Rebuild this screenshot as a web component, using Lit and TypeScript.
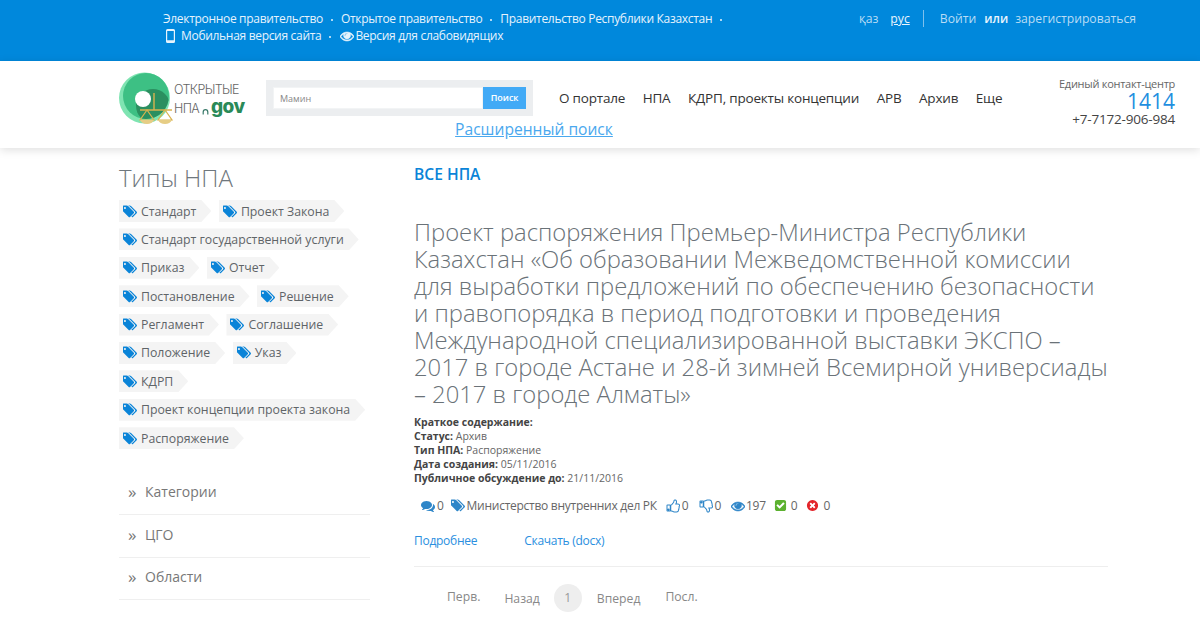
import { LitElement, html, css, svg } from "lit";
import { customElement } from "lit/decorators.js";

const P = {
  tags: "M384 448q0-53-37.5-90.5t-90.5-37.5-90.5 37.5-37.5 90.5 37.5 90.5 90.5 37.5 90.5-37.5 37.5-90.5zm1067 576q0 53-37 90l-491 492q-39 37-91 37-53 0-90-37l-715-716q-38-37-64.5-101t-26.5-117v-416q0-52 38-90t90-38h416q53 0 117 26.5t102 64.5l715 714q37 39 37 91zm384 0q0 53-37 90l-491 492q-39 37-91 37-36 0-59-14t-53-45l470-470q37-37 37-90 0-52-37-91l-715-714q-38-38-102-64.5t-117-26.5h224q53 0 117 26.5t102 64.5l715 714q37 39 37 91z",
  eye: "M1664 960q-152-236-381-353 61 104 61 225 0 185-131.5 316.5t-316.5 131.5-316.5-131.5-131.5-316.5q0-121 61-225-229 117-381 353 133 205 333.5 326.5t434.5 121.5 434.5-121.5 333.5-326.5zm-720-384q0-20-14-34t-34-14q-125 0-214.5 89.5t-89.5 214.5q0 20 14 34t34 14 34-14 14-34q0-86 61-147t147-61q20 0 34-14t14-34zm848 384q0 34-20 69-140 230-376.5 368.5t-499.5 138.5-499.5-139-376.5-368q-20-35-20-69t20-69q140-229 376.5-368t499.5-139 499.5 139 376.5 368q20 35 20 69z",
  check: "M813 1299l614-614q19-19 19-45t-19-45l-102-102q-19-19-45-19t-45 19l-467 467-211-211q-19-19-45-19t-45 19l-102 102q-19 19-19 45t19 45l358 358q19 19 45 19t45-19zm851-883v960q0 119-84.5 203.5t-203.5 84.5h-960q-119 0-203.5-84.5t-84.5-203.5v-960q0-119 84.5-203.5t203.5-84.5h960q119 0 203.5 84.5t84.5 203.5z",
  times: "M1277 1122q0-26-19-45l-181-181 181-181q19-19 19-45 0-27-19-46l-90-90q-19-19-46-19-26 0-45 19l-181 181-181-181q-19-19-45-19-27 0-46 19l-90 90q-19 19-19 46 0 26 19 45l181 181-181 181q-19 19-19 45 0 27 19 46l90 90q19 19 46 19 26 0 45-19l181-181 181 181q19 19 45 19 27 0 46-19l90-90q19-19 19-46zm387-226q0 209-103 385.5t-279.5 279.5-385.5 103-385.5-103-279.5-279.5-103-385.5 103-385.5 279.5-279.5 385.5-103 385.5 103 279.5 279.5 103 385.5z",
  comments: "M1408 768q0 139-94 257t-256.5 186.5-353.5 68.5q-86 0-176-16-124 88-278 128-36 9-86 16h-3q-11 0-20.5-8t-11.5-21q-1-3-1-6.5t.5-6.5 2-6l2.5-5 3.5-5.5 4-5 4.5-5 4-4.5q5-6 23-25t26-29.5 22.5-29 25-38.5 20.5-44q-124-72-195-177t-71-224q0-139 94-257t256.5-186.5 353.5-68.5 353.5 68.5 256.5 186.5 94 257zm384 256q0 120-71 224.5t-195 176.5q10 24 20.5 44t25 38.5 22.5 29 26 29.5 23 25q1 1 4 4.5t4.5 5 4 5 3.5 5.5l2.5 5 2 6 .5 6.5-1 6.5q-3 14-13 22t-22 7q-50-7-86-16-154-40-278-128-90 16-176 16-271 0-472-132 58 4 88 4 161 0 309-45t264-129q125-92 192-212t67-254q0-77-23-152 129 71 204 178t75 230z",
  thumb: "M384 1344q0-26-19-45t-45-19-45 19-19 45 19 45 45 19 45-19 19-45zm160-512v640q0 26-19 45t-45 19h-288q-26 0-45-19t-19-45v-640q0-26 19-45t45-19h288q26 0 45 19t19 45zm1184 0q0 86-55 149 15 44 15 76 3 76-43 137 17 56 0 117-15 57-54 94 9 112-49 181-64 76-197 78h-129q-66 0-144-15.5t-121.5-29-120.5-39.5q-123-43-158-44-26-1-45-19.5t-19-44.5v-641q0-25 18-43.5t43-20.5q24-2 76-59t101-121q68-87 101-120 18-18 31-48t17.5-48.5 13.5-60.5q7-39 12.5-61t19.5-52 34-50q19-19 45-19 46 0 82.5 10.5t60 26 40 40.5 24 45 12 50 5 45 .5 39q0 38-9.5 76t-19 60-27.5 56q-3 6-10 18t-11 22-8 24h277q78 0 135 57t57 135z",
};

const icon = (d: string, w: number, h: number, color: string, vb = "0 0 1792 1792") => html`<svg class="ic" width=${w} height=${h} viewBox=${vb} fill=${color}><path d=${d}></path></svg>`;
const eye = (color: string) => html`<svg class="ic" width="14" height="14" viewBox="0 0 1792 1792" fill=${color} stroke=${color} stroke-width="70"><path d=${P.eye}></path></svg>`;
const thumb = (down: boolean) => html`<svg class="ic" width="14" height="14" viewBox="0 0 1792 1792" fill="none" stroke="#2f86c8" stroke-width="130"><g transform=${down ? "translate(0 1792) scale(1 -1)" : ""}><path d=${P.thumb}></path></g></svg>`;

const tagRows = [
  ["Стандарт", "Проект Закона"],
  ["Стандарт государственной услуги"],
  ["Приказ", "Отчет"],
  ["Постановление", "Решение"],
  ["Регламент", "Соглашение"],
  ["Положение", "Указ"],
  ["КДРП"],
  ["Проект концепции проекта закона"],
  ["Распоряжение"],
];

@customElement("app-root")
export class AppRoot extends LitElement {
  static styles = css`
    :host { display: block; width: 1200px; height: 620px; overflow: hidden; background: #fff; font-family: "Open Sans", sans-serif; color: #444; }
    a { color: inherit; text-decoration: none; }
    .ic { display: block; flex: none; }

    .top { height: 61px; background: #0088dc; box-sizing: border-box; padding: 10px 64px 0 163px; display: flex; justify-content: space-between; color: #e6f3fc; line-height: 17px; }
    .top-left { display: flex; flex-direction: column; font-size: 12px; letter-spacing: -0.31px; }
    .top-row { display: flex; align-items: center; height: 17px; white-space: nowrap; }
    .dot { width: 2px; height: 2px; background: #e6f3fc; margin: 3px 8px 0 8px; border-radius: 50%; }
    .mob { margin: 0 6px 0 3px; }
    .eye { margin: 0 1px 0 1px; }
    .top-right { display: flex; align-items: center; height: 17px; color: #b9dcf5; font-size: 12.2px; }
    .lang { margin-right: 12px; }
    .cur { color: #eaf5fd; text-decoration: underline; margin-right: 13px; }
    .sep { width: 1px; height: 17px; background: #7fc0ec; margin-right: 16px; }
    .or { font-weight: 600; color: #e8f4fd; margin: 0 7px 0 8px; }

    .head { height: 87px; box-sizing: border-box; padding: 0 25px 0 119px; display: flex; background: #fff; box-shadow: 0 2px 9px rgba(0,0,0,0.13); position: relative; }
    .logo { width: 147px; flex: none; padding-top: 11px; box-sizing: border-box; }
    .logo-wrap { position: relative; width: 130px; height: 56px; }
    .logo-mark { position: absolute; left: 0; top: 0; }
    .l1, .l2 { position: absolute; left: 55px; white-space: nowrap; font-family: "Inter", sans-serif; color: #666; font-size: 12.5px; letter-spacing: -0.6px; font-weight: 300; line-height: 16px; }
    .l1 { top: 10px; }
    .l2 { top: 29px; }
    .house { position: absolute; left: 83px; top: 36px; }
    .gov { position: absolute; left: 92px; top: 22px; font-family: "Inter", sans-serif; font-weight: 800; color: #2a8a58; font-size: 19px; line-height: 26px; letter-spacing: -0.6px; }
    .center { width: 536px; flex: none; display: flex; flex-direction: column; }
    .center-row { display: flex; padding-top: 19px; }
    .search { width: 267px; height: 36px; background: #eceef0; box-sizing: border-box; padding: 7px; display: flex; flex: none; }
    .input { width: 211px; height: 22px; background: #fff; border: 1px solid #f2f4f5; box-sizing: border-box; padding-left: 6px; font-size: 9px; line-height: 21px; color: #888; }
    .btn { width: 43px; height: 22px; background: #42aaf6; color: #fff; font-size: 9px; font-weight: 600; line-height: 22px; text-align: center; }
    .nav { display: flex; gap: 17.6px; margin-left: 26px; font-size: 13.5px; letter-spacing: -0.2px; line-height: 36px; color: #333; white-space: nowrap; }
    .adv { text-align: center; font-size: 15.6px; line-height: 22px; color: #4aa8ee; text-decoration: underline; margin-top: 2px; }
    .contact { margin-left: auto; text-align: right; padding-top: 15px; white-space: nowrap; }
    .c1 { font-size: 11px; letter-spacing: -0.28px; line-height: 15px; color: #666; }
    .c2 { font-size: 21px; line-height: 21px; color: #1f8fe0; font-weight: 400; }
    .c3 { font-size: 13.5px; letter-spacing: -0.2px; line-height: 14px; color: #444; }

    .main { display: flex; padding-left: 119px; }
    .side { width: 251px; flex: none; margin-right: 44px; padding-top: 16px; }
    .side h2 { margin: 0; font-size: 24px; line-height: 28px; font-weight: 300; color: #6f777d; }
    .tags { display: flex; flex-direction: column; gap: 6.4px; margin-top: 8px; }
    .tag-row { display: flex; gap: 7.5px; }
    .tag { height: 22px; background: #f4f4f4; clip-path: polygon(0 0, calc(100% - 10px) 0, 100% 50%, calc(100% - 10px) 100%, 0 100%); display: flex; align-items: center; padding: 0 15px 0 4px; font-size: 12.3px; color: #5f6468; white-space: nowrap; }
    .tag .ic { margin-right: 4px; }
    .acc { margin-top: 22px; }
    .acc-item { height: 42.5px; border-bottom: 1px solid #efefef; display: flex; align-items: center; box-sizing: border-box; padding: 0 0 3px 9px; font-size: 14px; color: #777; }
    .chev { width: 17px; font-size: 17px; line-height: 17px; font-weight: 400; color: #777; }
    .acc-item:first-child { height: 44px; }

    .content { width: 694px; flex: none; padding-top: 16px; }
    .all { font-size: 15.6px; line-height: 20px; font-weight: 600; color: #0a84d8; }
    h1 { margin: 34.5px 0 0; font-size: 23.8px; line-height: 27px; font-weight: 300; color: #6a7278; }
    .meta { margin-top: 7.2px; font-size: 10.5px; line-height: 14px; color: #666; }
    .meta b { color: #444; font-weight: 700; }
    .stats { display: flex; align-items: center; height: 18px; margin-top: 12px; padding-left: 7px; font-size: 12px; letter-spacing: -0.27px; color: #666; }
    .stat { display: flex; align-items: center; gap: 2px; white-space: nowrap; }
    .links { display: flex; gap: 47px; margin-top: 17px; font-size: 12px; letter-spacing: -0.27px; line-height: 17px; color: #2a8fe0; }
    .rule { height: 1px; background: #eee; margin-top: 17px; }
    .pager { height: 50px; padding-left: 33px; display: flex; align-items: flex-start; font-size: 12.2px; color: #888; }
    .p { line-height: 17px; }
    .num { width: 28px; height: 28px; margin: 17px 15px 0 14px; border-radius: 50%; background: #eee; text-align: center; line-height: 28px; color: #999; }
  `;

  render() {
    return html`
      <div class="top">
        <div class="top-left">
          <div class="top-row">
            <a>Электронное правительство</a><span class="dot"></span>
            <a>Открытое правительство</a><span class="dot"></span>
            <a>Правительство Республики Казахстан</a><span class="dot"></span>
          </div>
          <div class="top-row">
            <svg class="ic mob" width="9" height="14" viewBox="0 0 9 14"><path fill-rule="evenodd" fill="#e6f3fc" d="M1.500 0h6A1.500 1.500 0 0 1 9 1.500v11A1.500 1.500 0 0 1 7.500 14h-6A1.500 1.500 0 0 1 0 12.500v-11A1.500 1.500 0 0 1 1.500 0zM1.200 2v9.300h6.600V2z"></path></svg>
            <a>Мобильная версия сайта</a><span class="dot"></span>
            <span class="eye">${eye("#e6f3fc")}</span>
            <a>Версия для слабовидящих</a>
          </div>
        </div>
        <div class="top-right">
          <a class="lang">қаз</a><a class="cur">рус</a><span class="sep"></span>
          <a>Войти</a><span class="or">или</span><a>зарегистрироваться</a>
        </div>
      </div>

      <div class="head">
        <div class="logo">
          <div class="logo-wrap">
            <svg class="logo-mark" width="56" height="56" viewBox="0 0 56 56">
              ${svg`<defs><clipPath id="mc"><circle cx="27" cy="24" r="23"></circle></clipPath></defs>
              <circle cx="25.500" cy="26" r="25.500" fill="#7fe4b2"></circle>
              <circle cx="27" cy="24" r="23" fill="#3dc084"></circle>
              <circle cx="34" cy="34" r="17" fill="#2b8f60" clip-path="url(#mc)"></circle>
              <circle cx="24" cy="27" r="8" fill="#fff"></circle>
              <path d="M35 21v17M21 38h32" stroke="#d9b34f" stroke-width="1.400" fill="none"></path>
              <path d="M28 38l-7 10h14zM46 38l-7 10h14z" stroke="#d9b34f" stroke-width="1.200" fill="none"></path>
              <path d="M21 48h14q-2 4-7 4t-7-4zM39 48h14q-2 4-7 4t-7-4z" fill="#e6cd85"></path>`}
            </svg>
            <span class="l1">ОТКРЫТЫЕ</span><span class="l2">НПА</span>
            <svg class="house" width="7" height="7" viewBox="0 0 7 7"><path d="M1.200 6.500V4a2.300 2.300 0 0 1 4.600 0v2.500" fill="none" stroke="#3a7a6a" stroke-width="1.200"></path></svg>
            <span class="gov">gov</span>
          </div>
        </div>
        <div class="center">
          <div class="center-row">
            <div class="search"><div class="input">Мамин</div><div class="btn">Поиск</div></div>
            <div class="nav"><a>О портале</a><a>НПА</a><a>КДРП, проекты концепции</a><a>АРВ</a><a>Архив</a><a>Еще</a></div>
          </div>
          <a class="adv">Расширенный поиск</a>
        </div>
        <div class="contact">
          <div class="c1">Единый контакт-центр</div>
          <div class="c2">1414</div>
          <div class="c3">+7-7172-906-984</div>
        </div>
      </div>

      <div class="main">
        <aside class="side">
          <h2>Типы НПА</h2>
          <div class="tags">
            ${tagRows.map((r) => html`<div class="tag-row">${r.map((t) => html`<a class="tag">${icon(P.tags, 14, 13, "#0a84d8", "0 200 1835 1400")}${t}</a>`)}</div>`)}
          </div>
          <div class="acc">
            ${["Категории", "ЦГО", "Области"].map((t) => html`<div class="acc-item"><span class="chev">»</span>${t}</div>`)}
          </div>
        </aside>
        <section class="content">
          <div class="all">ВСЕ НПА</div>
          <h1>Проект распоряжения Премьер-Министра Республики Казахстан «Об образовании Межведомственной комиссии для выработки предложений по обеспечению безопасности и правопорядка в период подготовки и проведения Международной специализированной выставки ЭКСПО – 2017 в городе Астане и 28-й зимней Всемирной универсиады – 2017 в городе Алматы»</h1>
          <div class="meta">
            <div><b>Краткое содержание:</b></div>
            <div><b>Статус:</b> Архив</div>
            <div><b>Тип НПА:</b> Распоряжение</div>
            <div><b>Дата создания:</b> 05/11/2016</div>
            <div><b>Публичное обсуждение до:</b> 21/11/2016</div>
          </div>
          <div class="stats">
            <span class="stat">${icon(P.comments, 14, 14, "#2f86c8")}0</span>
            <span class="stat" style="margin-left:7px">${icon(P.tags, 14, 13, "#2f86c8", "0 200 1835 1400")}Министерство внутренних дел РК</span>
            <span class="stat" style="margin-left:9px">${thumb(false)}0</span>
            <span class="stat" style="margin-left:11px;gap:1px">${thumb(true)}0</span>
            <span class="stat" style="margin-left:10px;gap:1px">${eye("#2f86c8")}197</span>
            <span class="stat" style="margin-left:8px;gap:4px">${icon(P.check, 13, 13, "#5cb130")}0</span>
            <span class="stat" style="margin-left:9px;gap:4px">${icon(P.times, 13, 13, "#e3252b")}0</span>
          </div>
          <div class="links"><a>Подробнее</a><a>Скачать (docx)</a></div>
          <div class="rule"></div>
          <div class="pager">
            <a class="p" style="margin-top:21px">Перв.</a>
            <a class="p" style="margin:23px 0 0 24px">Назад</a>
            <span class="num">1</span>
            <a class="p" style="margin-top:23px">Вперед</a>
            <a class="p" style="margin:21px 0 0 25px">Посл.</a>
          </div>
        </section>
      </div>
    `;
  }
}
